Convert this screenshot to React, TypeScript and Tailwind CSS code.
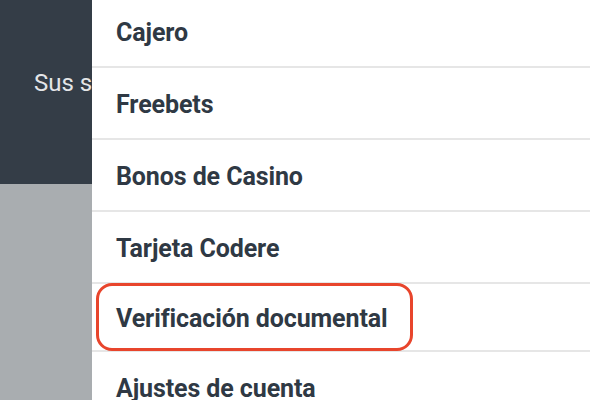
import React from "react";

const items = [
  "Cajero",
  "Freebets",
  "Bonos de Casino",
  "Tarjeta Codere",
  "Verificación documental",
  "Ajustes de cuenta",
];

export default function App() {
  return (
    <div className="flex h-[400px] w-[590px] overflow-hidden bg-[#a9adb0] font-['Roboto',sans-serif]">
      {/* fond de la page, caché par le menu */}
      <div className="w-[92px] shrink-0 overflow-hidden">
        <div className="flex h-[184px] items-center bg-[#343d47] pb-[18px] pl-[34px]">
          <span className="whitespace-nowrap text-[24px] text-[#e4e6e8]">Sus saldos</span>
        </div>
      </div>

      {/* menu latéral */}
      <nav className="-mt-[4px] flex-1 bg-white">
        {items.map((label) => (
          <div key={label} className="border-b-2 border-[#e6e6e6] px-[4px]">
            <div
              className={
                label === "Verificación documental"
                  ? "my-[-1px] flex h-[68px] w-[317px] items-center rounded-[16px] border-[3px] border-[#e8452c] pl-[17px]"
                  : "flex h-[70px] items-center pl-[20px]"
              }
            >
              <span className="pt-[3px] text-[25px] font-bold tracking-[-0.1px] text-[#2f3944]">{label}</span>
            </div>
          </div>
        ))}
      </nav>
    </div>
  );
}
